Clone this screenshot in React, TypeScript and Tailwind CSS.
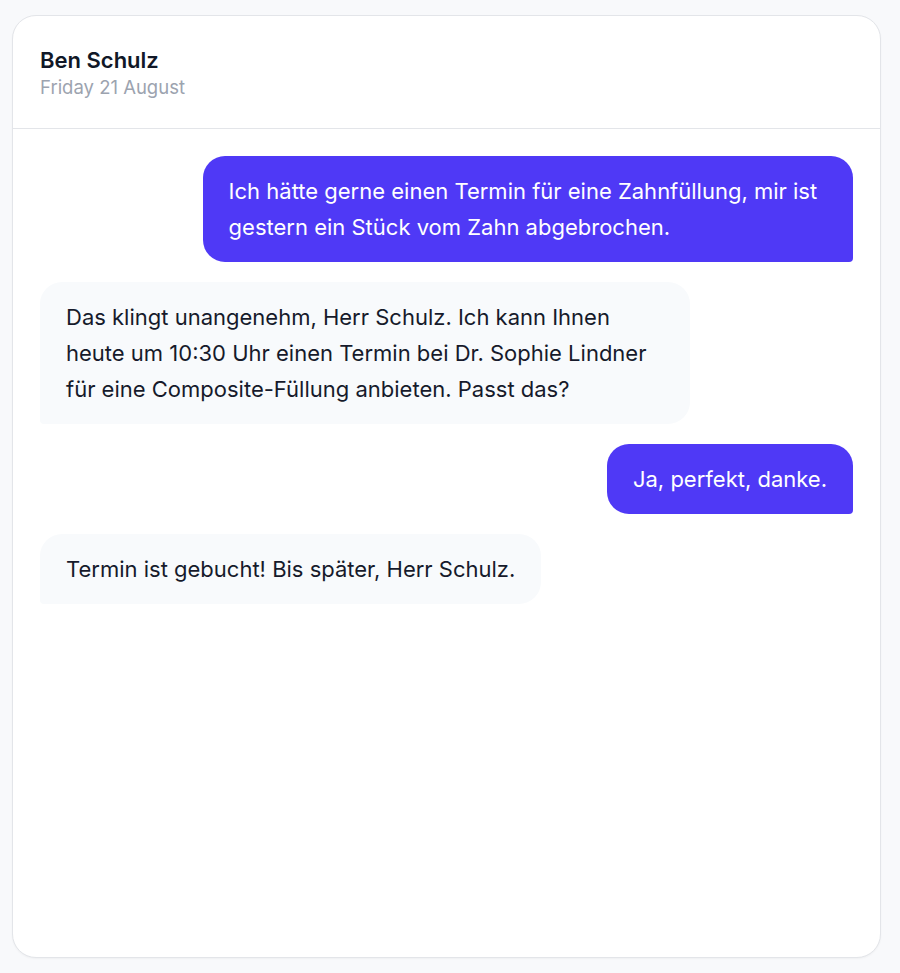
import React from "react";

const messages: { from: "user" | "bot"; lines: string[] }[] = [
  { from: "user", lines: ["Ich hätte gerne einen Termin für eine Zahnfüllung, mir ist", "gestern ein Stück vom Zahn abgebrochen."] },
  {
    from: "bot",
    lines: [
      "Das klingt unangenehm, Herr Schulz. Ich kann Ihnen",
      "heute um 10:30 Uhr einen Termin bei Dr. Sophie Lindner",
      "für eine Composite-Füllung anbieten. Passt das?",
    ],
  },
  { from: "user", lines: ["Ja, perfekt, danke."] },
  { from: "bot", lines: ["Termin ist gebucht! Bis später, Herr Schulz."] },
];

export default function App() {
  return (
    <div
      className="min-h-[973px] bg-[#f8f9fb] pt-[15px] pl-[12px]"
      style={{ fontFamily: "Inter, 'Noto Sans', sans-serif" }}
    >
      <div className="w-[869px] h-[943px] bg-white border border-[#e3e5e9] rounded-[24px] flex flex-col overflow-hidden shadow-[0_1px_2px_rgba(0,0,0,0.04)]">
        <div className="px-[27px] pt-[30px] pb-[28px] border-b border-[#e3e5e9]">
          <div className="text-[22px] leading-[28px] font-semibold text-[#111827]">Ben Schulz</div>
          <div className="text-[18.5px] leading-[26px] text-[#9ca3af]">Friday 21 August</div>
        </div>
        <div className="flex flex-col gap-5 px-[27px] pt-[27px]">
          {messages.map((m, i) => {
            const multi = m.lines.length > 1;
            const text = m.lines.map((l, j) => (
              <span key={j} className="block whitespace-nowrap">
                {l}
              </span>
            ));
            return m.from === "user" ? (
              <div key={i} className="flex justify-end">
                <div
                  className={`${multi ? "w-[80%]" : ""} max-w-[80%] bg-[#4f39f6] text-white rounded-[22px] rounded-br-[4px] px-[26px] py-[17px] text-[22px] leading-[36px]`}
                >
                  {text}
                </div>
              </div>
            ) : (
              <div key={i} className="flex justify-start">
                <div
                  className={`${multi ? "w-[80%]" : ""} max-w-[80%] bg-[#f8fafc] text-[#161a2b] rounded-[22px] rounded-bl-[4px] px-[26px] py-[17px] text-[22px] leading-[36px]`}
                >
                  {text}
                </div>
              </div>
            );
          })}
        </div>
      </div>
    </div>
  );
}
